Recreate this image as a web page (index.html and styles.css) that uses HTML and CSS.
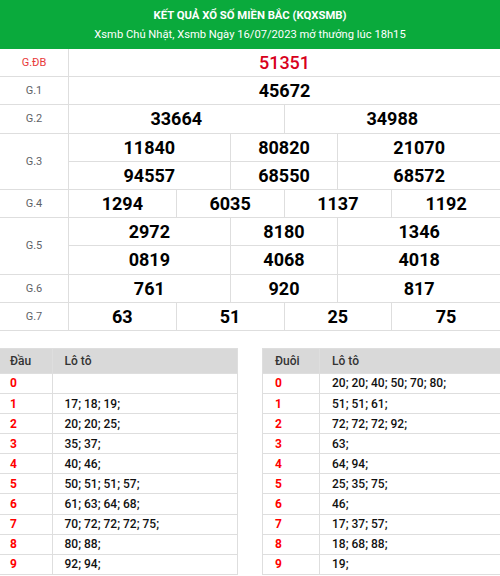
FILE: index.html
```html
<!DOCTYPE html>
<html lang="vi">
<head>
<meta charset="utf-8">
<title>KQXSMB</title>
<link rel="stylesheet" href="styles.css">
</head>
<body>
<div class="page">
  <div class="head">
    <h1 class="title">KẾT QUẢ XỔ SỐ MIỀN BẮC (KQXSMB)</h1>
    <p class="sub">Xsmb Chủ Nhật, Xsmb Ngày 16/07/2023 mở thưởng lúc 18h15</p>
  </div>

  <div class="results">
    <div class="prize">
      <div class="label label-red">G.ĐB</div>
      <div class="nums"><div class="n s8 last special">51351</div></div>
    </div>
    <div class="prize">
      <div class="label">G.1</div>
      <div class="nums"><div class="n s8 last">45672</div></div>
    </div>
    <div class="prize">
      <div class="label">G.2</div>
      <div class="nums"><div class="n s4">33664</div><div class="n s4 last">34988</div></div>
    </div>
    <div class="prize">
      <div class="label">G.3</div>
      <div class="nums">
        <div class="n s3 top">11840</div><div class="n s2 top">80820</div><div class="n s3 last top">21070</div>
        <div class="n s3">94557</div><div class="n s2">68550</div><div class="n s3 last">68572</div>
      </div>
    </div>
    <div class="prize">
      <div class="label">G.4</div>
      <div class="nums"><div class="n s2">1294</div><div class="n s2">6035</div><div class="n s2">1137</div><div class="n s2 last">1192</div></div>
    </div>
    <div class="prize">
      <div class="label">G.5</div>
      <div class="nums">
        <div class="n s3 top">2972</div><div class="n s2 top">8180</div><div class="n s3 last top">1346</div>
        <div class="n s3">0819</div><div class="n s2">4068</div><div class="n s3 last">4018</div>
      </div>
    </div>
    <div class="prize">
      <div class="label">G.6</div>
      <div class="nums"><div class="n s3">761</div><div class="n s2">920</div><div class="n s3 last">817</div></div>
    </div>
    <div class="prize">
      <div class="label">G.7</div>
      <div class="nums"><div class="n s2">63</div><div class="n s2">51</div><div class="n s2">25</div><div class="n s2 last">75</div></div>
    </div>
  </div>

  <div class="loto-wrap">
    <table class="loto loto-left">
      <thead><tr><th class="c1">Đầu</th><th>Lô tô</th></tr></thead>
      <tbody>
        <tr><td class="c1">0</td><td></td></tr>
        <tr><td class="c1">1</td><td>17; 18; 19;</td></tr>
        <tr><td class="c1">2</td><td>20; 20; 25;</td></tr>
        <tr><td class="c1">3</td><td>35; 37;</td></tr>
        <tr><td class="c1">4</td><td>40; 46;</td></tr>
        <tr><td class="c1">5</td><td>50; 51; 51; 57;</td></tr>
        <tr><td class="c1">6</td><td>61; 63; 64; 68;</td></tr>
        <tr><td class="c1">7</td><td>70; 72; 72; 72; 75;</td></tr>
        <tr><td class="c1">8</td><td>80; 88;</td></tr>
        <tr><td class="c1">9</td><td>92; 94;</td></tr>
      </tbody>
    </table>
    <table class="loto loto-right">
      <thead><tr><th class="c1">Đuôi</th><th>Lô tô</th></tr></thead>
      <tbody>
        <tr><td class="c1">0</td><td>20; 20; 40; 50; 70; 80;</td></tr>
        <tr><td class="c1">1</td><td>51; 51; 61;</td></tr>
        <tr><td class="c1">2</td><td>72; 72; 72; 92;</td></tr>
        <tr><td class="c1">3</td><td>63;</td></tr>
        <tr><td class="c1">4</td><td>64; 94;</td></tr>
        <tr><td class="c1">5</td><td>25; 35; 75;</td></tr>
        <tr><td class="c1">6</td><td>46;</td></tr>
        <tr><td class="c1">7</td><td>17; 37; 57;</td></tr>
        <tr><td class="c1">8</td><td>18; 68; 88;</td></tr>
        <tr><td class="c1">9</td><td>19;</td></tr>
      </tbody>
    </table>
  </div>
</div>
</body>
</html>
```

FILE: styles.css
```css
* { box-sizing: border-box; }
html, body { margin: 0; padding: 0; background: #fff; }
body { font-family: Roboto, "Noto Sans", "Liberation Sans", sans-serif; color: #000; }
.page { width: 500px; }

.head {
  background: #0aaa3c;
  color: #fff;
  text-align: center;
  height: 49px;
  padding-top: 8px;
}
.title { margin: 0; font-size: 11.3px; font-weight: 700; line-height: 16px; }
.sub { margin: 2px 0 0; font-size: 11.2px; font-weight: 400; line-height: 18px; }

.prize {
  display: grid;
  grid-template-columns: 69px 1fr;
  border-bottom: 1px solid #dedede;
}
.label {
  border-right: 1px solid #dedede;
  display: flex;
  align-items: center;
  justify-content: center;
  font-size: 11px;
  color: #5f6368;
}
.label-red { color: #e8393a; }
.nums { display: grid; grid-template-columns: repeat(8, 1fr); }
.n {
  height: 27.2px;
  display: flex;
  align-items: center;
  justify-content: center;
  font-size: 18px;
  font-weight: 700;
  border-right: 1px solid #dedede;
  color: #000;
}
.n.top { border-bottom: 1px solid #dedede; height: 28.2px; }
.n.last { border-right: 0; }
.s2 { grid-column: span 2; }
.s3 { grid-column: span 3; }
.s4 { grid-column: span 4; }
.s8 { grid-column: span 8; }
.special { color: #d8001b; font-weight: 500; }

.loto-wrap {
  display: flex;
  justify-content: space-between;
  margin-top: 17px;
}
.loto {
  width: 238px;
  border-collapse: collapse;
  font-size: 12px;
  table-layout: fixed;
}
.loto th, .loto td {
  border: 1px solid #dedede;
  text-align: left;
  padding: 0 0 0 12px;
  white-space: nowrap;
}
.loto th {
  background: #d9d9d9;
  height: 25px;
  color: #333;
  font-weight: 500;
}
.loto td { height: 20.1px; font-weight: 500; color: #111; }
.loto td.c1 { color: #f00; font-weight: 700; }
.loto-left .c1 { width: 52px; padding-left: 10px; }
.loto-right .c1 { width: 57px; }
.loto-left th:first-child, .loto-left td:first-child { border-left: 0; }
.loto-right th:last-child, .loto-right td:last-child { border-right: 0; }
```
